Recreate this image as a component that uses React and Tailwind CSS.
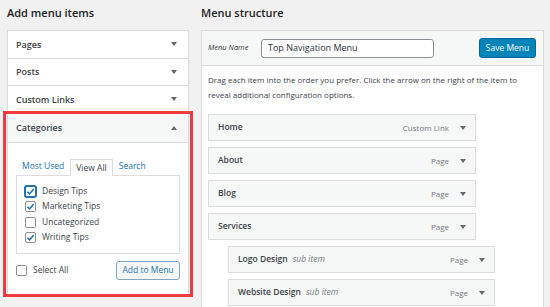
import React from "react";

const Arrow = ({ up }) => (
  <svg width="6" height="4" viewBox="0 0 6 4" className="shrink-0">
    {up ? <polygon points="0,4 6,4 3,0" fill="#646970" /> : <polygon points="0,0 6,0 3,4" fill="#646970" />}
  </svg>
);

const Check = ({ checked, focus }) => (
  <span
    className={
      "w-[11px] h-[11px] rounded-[2px] bg-white flex items-center justify-center shrink-0 " +
      (focus ? "border-[1.5px] border-[#2271b1] shadow-[0_0_0_1px_#2271b1]" : "border border-[#8c8f94]")
    }
  >
    {checked && (
      <svg width="9" height="9" viewBox="0 0 10 10">
        <path d="M1.5 5.2 L4 7.6 L8.6 2.2" stroke="#2271b1" strokeWidth="1.6" fill="none" />
      </svg>
    )}
  </span>
);

const cats = [
  { label: "Design Tips", checked: true, focus: true },
  { label: "Marketing Tips", checked: true },
  { label: "Uncategorized", checked: false },
  { label: "Writing Tips", checked: true },
];

const items = [
  { title: "Home", type: "Custom Link" },
  { title: "About", type: "Page" },
  { title: "Blog", type: "Page" },
  { title: "Services", type: "Page" },
  { title: "Logo Design", type: "Page", sub: true },
  { title: "Website Design", type: "Page", sub: true },
];

export default function App() {
  return (
    <div
      className="relative w-[550px] h-[307px] overflow-hidden bg-[#f1f1f1] text-[#2c3338] flex gap-[12px] px-[7px]"
      style={{ fontFamily: "'Open Sans', 'Noto Sans', sans-serif" }}
    >
      {/* left column */}
      <div className="w-[182px] shrink-0">
        <h2 className="h-[30px] pt-[5px] text-[11px] font-semibold text-[#1d2327]">Add menu items</h2>
        <div className="bg-white border border-[#dcdcde] shadow-[0_1px_1px_rgba(0,0,0,0.06)]">
          {["Pages", "Posts", "Custom Links"].map(t => (
            <div key={t} className="h-[27.5px] border-b border-[#dcdcde] flex items-center justify-between pl-[8px] pr-[11px]">
              <span className="text-[9px] font-semibold text-[#3c434a]">{t}</span>
              <Arrow />
            </div>
          ))}
          <div className="h-[29px] bg-[#f6f7f7] border-b border-[#dcdcde] flex items-center justify-between pl-[8px] pr-[11px]">
            <span className="text-[9px] font-semibold text-[#3c434a]">Categories</span>
            <Arrow up />
          </div>
          <div className="px-[8px] pt-[15px] pb-[15px]">
            <div className="flex items-end text-[8.5px] text-[#2271b1] h-[17px]">
              <span className="px-[6px] pb-[2px]">Most Used</span>
              <span className="h-[17px] px-[5px] pt-[2px] bg-white border border-b-0 border-[#dcdcde] text-[#3c434a] relative top-px">View All</span>
              <span className="px-[6px] pb-[2px]">Search</span>
            </div>
            <div className="border border-[#dcdcde] h-[79px] pl-[8px] pt-[10px] flex flex-col gap-[4.5px]">
              {cats.map(c => (
                <div key={c.label} className="flex items-center gap-[6px] h-[11px]">
                  <Check checked={c.checked} focus={c.focus} />
                  <span className="text-[8.5px] text-[#3c434a]">{c.label}</span>
                </div>
              ))}
            </div>
            <div className="flex items-center justify-between mt-[7px]">
              <div className="flex items-center gap-[6px]">
                <Check />
                <span className="text-[8.5px] text-[#3c434a]">Select All</span>
              </div>
              <button className="h-[19px] w-[64px] rounded-[3px] border border-[#7fa7c4] bg-[#f6f7f7] text-[8.5px] text-[#2271b1]">
                Add to Menu
              </button>
            </div>
          </div>
        </div>
      </div>

      {/* right column */}
      <div className="w-[343px] shrink-0">
        <h2 className="h-[30px] pt-[5px] text-[11px] font-semibold text-[#1d2327]">Menu structure</h2>
        <div className="bg-white border border-[#dcdcde] h-[290px]">
          <div className="h-[35px] bg-[#f6f7f7] border-b border-[#dcdcde] flex items-center pl-[6px] pr-[7px]">
            <span className="text-[7.5px] italic w-[53px]">Menu Name</span>
            <div className="h-[19px] w-[173px] rounded-[3px] border border-[#8c8f94] bg-white flex items-center px-[6px] text-[9px]">
              Top Navigation Menu
            </div>
            <div className="flex-1" />
            <button className="h-[20px] w-[57px] rounded-[3px] bg-[#0085ba] border border-[#006799] text-white text-[8.5px]">
              Save Menu
            </button>
          </div>
          <div className="pl-[6px] pt-[6px]">
            <p className="text-[8px] leading-[15px] text-[#3c434a]">
              Drag each item into the order you prefer. Click the arrow on the right of the item to
              <br />
              reveal additional configuration options.
            </p>
            <div className="mt-[12px] flex flex-col gap-[6px]">
              {items.map(it => (
                <div
                  key={it.title}
                  className={
                    "h-[27px] bg-[#f6f7f7] border border-[#dcdcde] flex items-center pl-[9px] pr-[9px] " +
                    (it.sub ? "ml-[20px] w-[267px]" : "w-[268px]")
                  }
                >
                  <span className="text-[8.5px] font-semibold text-[#3c434a]">{it.title}</span>
                  {it.sub && <span className="ml-[5px] text-[8.5px] italic text-[#787c82]">sub item</span>}
                  <span className="ml-auto text-[8px] text-[#787c82] mr-[11px]">{it.type}</span>
                  <Arrow />
                </div>
              ))}
            </div>
          </div>
        </div>
      </div>

      {/* highlight annotation */}
      <div className="absolute left-[3px] top-[111px] w-[190px] h-[186px] border-[3px] border-[#ef3b42] pointer-events-none" />
    </div>
  );
}
